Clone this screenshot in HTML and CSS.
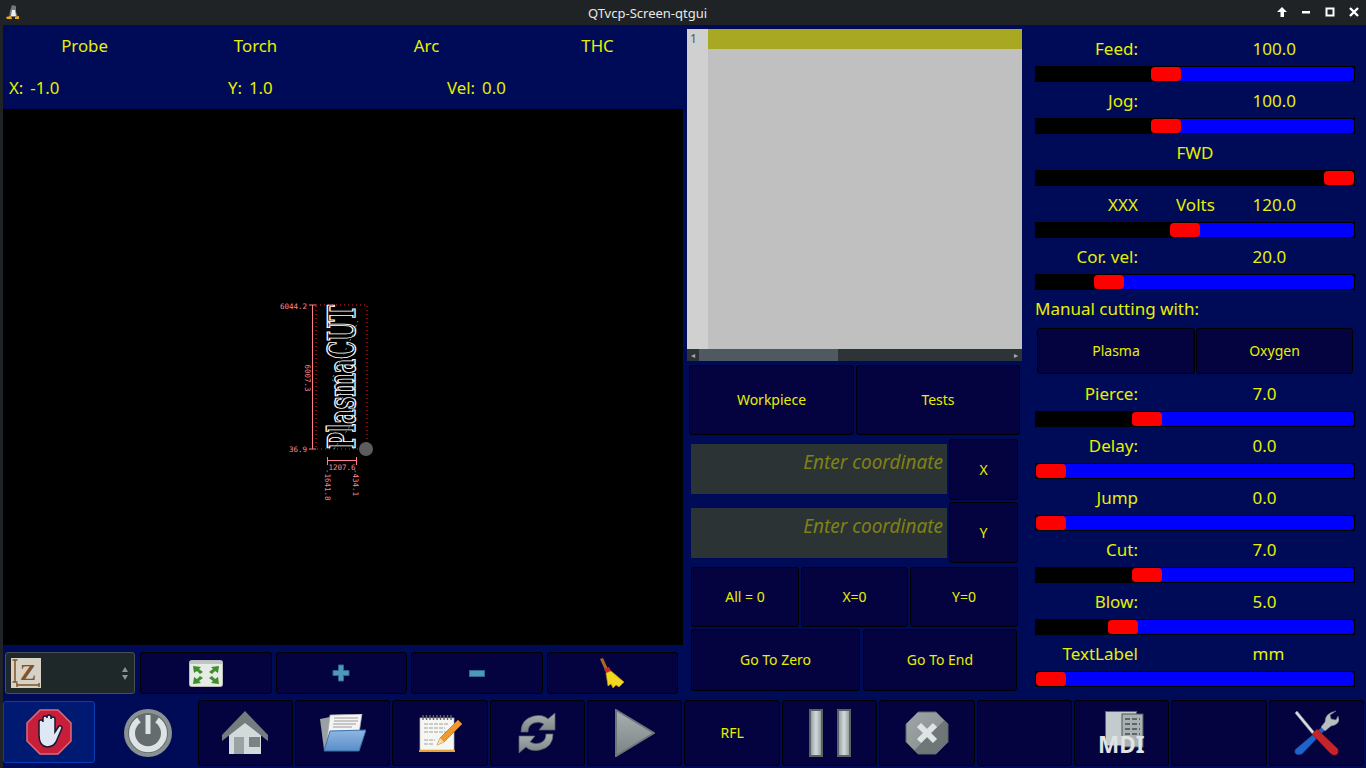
FILE: index.html
```html
<!DOCTYPE html>
<html lang="en">
<head>
<meta charset="UTF-8">
<meta name="viewport" content="width=device-width, initial-scale=1.0">
<title>QTvcp-Screen-qtgui</title>
<link rel="stylesheet" href="styles.css">
</head>
<body>
<svg class="defs" width="0" height="0">
    <defs>
        <linearGradient id="greyV" x1="0" y1="0" x2="1" y2="1"><stop offset="0" stop-color="#a0a7a8"/><stop offset="0.55" stop-color="#8f9697"/><stop offset="0.56" stop-color="#6f7779"/><stop offset="1" stop-color="#6d7577"/></linearGradient>
        <linearGradient id="greyH" x1="0" y1="0" x2="1" y2="0"><stop offset="0" stop-color="#8d9596"/><stop offset="0.5" stop-color="#d3dadb"/><stop offset="1" stop-color="#8d9596"/></linearGradient>
        <linearGradient id="playG" x1="0" y1="0" x2="0" y2="1"><stop offset="0" stop-color="#a8b0b1"/><stop offset="1" stop-color="#7b8385"/></linearGradient>
        <linearGradient id="folderG" x1="0" y1="0" x2="0" y2="1"><stop offset="0" stop-color="#8fb8e2"/><stop offset="1" stop-color="#5a8dc8"/></linearGradient>
    </defs>
</svg>
<div class="titlebar">
    <svg class="tux" viewBox="0 0 16 16" width="16" height="16">
        <path d="M7 1 L11 2 L11 8 L13 13 L4 13 L5 7 Z" fill="#777"/>
        <path d="M7 6 L10 6 L11 12 L6 12 Z" fill="#eee"/>
        <path d="M1 13 L6 12 L7 15 L2 15 Z M10 13 L14 12 L14 15 L10 15 Z" fill="#f0a818"/>
    </svg>
    <span class="title">QTvcp-Screen-qtgui</span>
    <div class="winbtns">
        <svg viewBox="0 0 12 12" width="12" height="12"><path d="M6 1 L11 6 L8 6 L8 11 L4.500 11 L4.500 6 L1 6 Z" fill="#fff"/></svg>
        <svg viewBox="0 0 12 12" width="12" height="12"><rect x="2" y="5" width="8" height="2.500" fill="#fff"/></svg>
        <svg viewBox="0 0 12 12" width="12" height="12"><rect x="2.500" y="2.500" width="7" height="7" fill="none" stroke="#fff" stroke-width="2"/></svg>
        <svg viewBox="0 0 12 12" width="12" height="12"><path d="M2 2 L10 10 M10 2 L2 10" stroke="#fff" stroke-width="2.400"/></svg>
    </div>
</div>

<div class="main">
    <div class="left">
        <div class="status">
            <span>Probe</span><span>Torch</span><span>Arc</span><span>THC</span>
        </div>
        <div class="coords">
            <span>X:<i class="cval">-1.0</i></span><span>Y:<i class="cval">1.0</i></span><span>Vel:<i class="cval">0.0</i></span>
        </div>
        <div class="canvas">
            <svg class="plot" viewBox="0 0 680 536" width="680" height="536">
                <rect x="313" y="196" width="51" height="144" fill="none" stroke="#ff1a1a" stroke-dasharray="1 3"/>
                <path class="dim" d="M306 196 H313 M306 340 H313 M309.500 196 V340 M324 351.500 H353 M324.500 348 V356 M353.500 348 V356"/>
                <text class="dimtxt" x="304" y="199.500" text-anchor="end">6044.2</text>
                <text class="dimtxt" x="304" y="343" text-anchor="end">36.9</text>
                <text class="dimtxt" transform="translate(302 269) rotate(90)" text-anchor="middle">6007.3</text>
                <text class="dimtxt" x="339" y="361" text-anchor="middle">1207.6</text>
                <text class="dimtxt" transform="translate(322 360) rotate(90)">-1641.8</text>
                <text class="dimtxt" transform="translate(350 360) rotate(90)">-434.1</text>
                <text class="logo" transform="translate(352 340) rotate(-90)" textLength="144" lengthAdjust="spacingAndGlyphs">PlasmaCUT</text>
                <path d="M331 340 L352 310 L329 270 L350 225 L355 212" fill="none" stroke="#5f9a9a" stroke-dasharray="2 3"/>
                <circle cx="363" cy="340" r="7" fill="#5c5c5c"/>
            </svg>
        </div>
        <div class="viewbar">
            <div class="combo">
                <svg viewBox="0 0 30 30" width="30" height="30">
                    <rect width="30" height="30" fill="#d8d2c4"/>
                    <path d="M4 2 V24 M1.500 2 H6.500 M1.500 24 H6.500 M6 27 H28 M6 25 V29 M28 25 V29" fill="none" stroke="#80542a" stroke-width="1.500"/>
                    <text class="zlabel" x="17" y="22" text-anchor="middle">Z</text>
                </svg>
                <span class="arrows"><i class="up"></i><i class="down"></i></span>
            </div>
            <button class="btn"><svg viewBox="0 0 34 27" width="34" height="27">
                <rect x="0.500" y="0.500" width="33" height="26" rx="2" fill="#e6ebe6" stroke="#b9bebc"/>
                <rect x="1" y="1" width="32" height="3" fill="#c0c5c6"/>
                <path d="M4 6 L12 7 L10 9 L14 12 L11 14 L8 11 L5 13 Z M30 6 L22 7 L24 9 L20 12 L23 14 L26 11 L29 13 Z M4 24 L12 23 L10 21 L14 18 L11 16 L8 19 L5 17 Z M30 24 L22 23 L24 21 L20 18 L23 16 L26 19 L29 17 Z" fill="#3f8f2a"/>
            </svg></button>
            <button class="btn"><svg viewBox="0 0 18 18" width="18" height="18">
                <path d="M6.500 1 H11.500 V6.500 H17 V11.500 H11.500 V17 H6.500 V11.500 H1 V6.500 H6.500 Z" fill="#4f97bb" stroke="#2c6a8c"/>
            </svg></button>
            <button class="btn"><svg viewBox="0 0 16 7" width="16" height="7">
                <rect x="0.500" y="0.500" width="15" height="6" fill="#4f97bb" stroke="#2c6a8c"/>
            </svg></button>
            <button class="btn"><svg viewBox="0 0 26 30" width="26" height="30">
                <path d="M1 1 L4 0 L9 11 L6 12 Z" fill="#a86a1e"/>
                <path d="M5 11 L10 9 L12 13 L7 15 Z" fill="#c92a2a"/>
                <path d="M7 15 L12 13 L25 24 L20 29 L17 27 L14 30 L12 26 L9 28 Z" fill="#f2d81e" stroke="#b69a10" stroke-width="0.700"/>
            </svg></button>
        </div>
    </div>

    <div class="middle">
        <div class="editor">
            <div class="gutter"><div class="lineno">1</div></div>
            <div class="lines"><div class="curline"></div></div>
        </div>
        <div class="hscroll">
            <span class="sarrow">◂</span><div class="sthumb"></div><span class="sarrow">▸</span>
        </div>
        <div class="row2">
            <button class="btn">Workpiece</button>
            <button class="btn">Tests</button>
        </div>
        <div class="entry">
            <div class="coordinput">Enter coordinate</div>
            <button class="btn axis">X</button>
        </div>
        <div class="entry entry-y">
            <div class="coordinput">Enter coordinate</div>
            <button class="btn axis">Y</button>
        </div>
        <div class="row3">
            <button class="btn">All = 0</button>
            <button class="btn">X=0</button>
            <button class="btn">Y=0</button>
        </div>
        <div class="row4">
            <button class="btn">Go To Zero</button>
            <button class="btn">Go To End</button>
        </div>
    </div>

    <div class="right">
        <div class="srow"><div class="slabel"><span class="sname">Feed:</span><span class="sval">100.0</span></div>
            <div class="slider"><div class="gap" style="width:36.200%"></div><div class="knob"></div><div class="fill"></div></div></div>
        <div class="srow"><div class="slabel"><span class="sname">Jog:</span><span class="sval">100.0</span></div>
            <div class="slider"><div class="gap" style="width:36.200%"></div><div class="knob"></div><div class="fill"></div></div></div>
        <div class="srow"><div class="slabel"><span class="sfwd">FWD</span></div>
            <div class="slider"><div class="gap" style="width:90.500%"></div><div class="knob"></div></div></div>
        <div class="srow"><div class="slabel"><span class="sname">XXX</span><span class="svolts">Volts</span><span class="sval">120.0</span></div>
            <div class="slider"><div class="gap" style="width:42.100%"></div><div class="knob"></div><div class="fill"></div></div></div>
        <div class="srow"><div class="slabel"><span class="sname">Cor. vel:</span><span class="sval">20.0</span></div>
            <div class="slider"><div class="gap" style="width:18.200%"></div><div class="knob"></div><div class="fill"></div></div></div>
        <div class="manual">Manual cutting with:</div>
        <div class="gasrow">
            <button class="btn">Plasma</button>
            <button class="btn">Oxygen</button>
        </div>
        <div class="srow"><div class="slabel"><span class="sname">Pierce:</span><span class="sval">7.0</span></div>
            <div class="slider"><div class="gap" style="width:30.200%"></div><div class="knob"></div><div class="fill"></div></div></div>
        <div class="srow"><div class="slabel"><span class="sname">Delay:</span><span class="sval">0.0</span></div>
            <div class="slider"><div class="gap" style="width:0"></div><div class="knob"></div><div class="fill"></div></div></div>
        <div class="srow"><div class="slabel"><span class="sname">Jump</span><span class="sval">0.0</span></div>
            <div class="slider"><div class="gap" style="width:0"></div><div class="knob"></div><div class="fill"></div></div></div>
        <div class="srow"><div class="slabel"><span class="sname">Cut:</span><span class="sval">7.0</span></div>
            <div class="slider"><div class="gap" style="width:30.200%"></div><div class="knob"></div><div class="fill"></div></div></div>
        <div class="srow"><div class="slabel"><span class="sname">Blow:</span><span class="sval">5.0</span></div>
            <div class="slider"><div class="gap" style="width:22.600%"></div><div class="knob"></div><div class="fill"></div></div></div>
        <div class="srow"><div class="slabel"><span class="sname">TextLabel</span><span class="sval">mm</span></div>
            <div class="slider"><div class="gap" style="width:0"></div><div class="knob"></div><div class="fill"></div></div></div>
    </div>
</div>

<div class="toolbar">
    <button class="tool selected"><svg viewBox="0 0 46 46" width="46" height="46">
        <path d="M14 1 H32 L45 14 V32 L32 45 H14 L1 32 V14 Z" fill="#c81e3a" stroke="#e06a78" stroke-width="1.500"/>
        <path d="M13 26 V13 a2 2 0 0 1 4 0 V9 a2 2 0 0 1 4 0 V8 a2 2 0 0 1 4 0 V10 a2 2 0 0 1 4 0 V23 L33 17 a2 2 0 0 1 3 2 L30 33 Q27 38 21 38 Q13 37 13 26 Z" fill="#dfe7f5" stroke="#151a2e" stroke-width="1.500"/>
    </svg></button>
    <button class="tool plain"><svg viewBox="0 0 48 48" width="48" height="48">
        <circle cx="24" cy="24" r="24" fill="#8a9192"/>
        <circle cx="24" cy="24" r="20" fill="#646c6e"/>
        <path d="M15 11 A16 16 0 1 0 33 11" fill="none" stroke="#dce4e6" stroke-width="6"/>
        <rect x="21.500" y="6" width="5" height="19" fill="#dce4e6"/>
    </svg></button>
    <button class="tool"><svg viewBox="0 0 46 44" width="46" height="44">
        <path d="M7 22 L23 8 L39 22 V43 H7 Z" fill="#d3dadb"/>
        <path d="M0 24 L23 0 L46 24 L46 30 L23 12 L0 30 Z" fill="#747c7e"/>
        <rect x="12" y="26" width="10" height="17" fill="#9aa2a4"/>
        <rect x="27" y="26" width="11" height="10" fill="#7b8385"/>
    </svg></button>
    <button class="tool"><svg viewBox="0 0 46 38" width="46" height="38">
        <path d="M0 5 L10 3 L8 36 L4 36 Z" fill="#9aa1a3"/>
        <path d="M10 1 L42 0 L38 26 L6 34 Z" fill="#f4f4f4" stroke="#a8a8a8" stroke-width="0.700"/>
        <path d="M14 4 H38 M14 7 H38 M13 10 H36 M13 13 H32" stroke="#9a9a9a"/>
        <path d="M10 17 L46 16 L39 37 L4 37 Z" fill="url(#folderG)" stroke="#3b6fa8"/>
    </svg></button>
    <button class="tool"><svg viewBox="0 0 43 37" width="43" height="37">
        <rect x="1" y="3" width="34" height="32" fill="#f6f6f2" stroke="#b8b8b4" stroke-width="0.700"/>
        <rect x="0" y="35" width="36" height="2" fill="#e8a23a"/>
        <path d="M4 0 V5 M7.500 0 V5 M11 0 V5 M14.500 0 V5 M18 0 V5 M21.500 0 V5 M25 0 V5 M28.500 0 V5 M32 0 V5" stroke="#666" stroke-width="1.400"/>
        <path d="M5 9 H30 M5 13 H26 M5 17 H28 M5 25 H16 M5 29 H15" stroke="#a0a0a0" stroke-dasharray="4 1"/>
        <path d="M39 5 L43 9 L25 27 L18 30 L21 23 Z" fill="#f09a2e" stroke="#c4701a" stroke-width="0.700"/>
        <path d="M21 23 L25 27 L18 30 Z" fill="#f2dcb8"/>
    </svg></button>
    <button class="tool"><svg viewBox="0 0 38 40" width="38" height="40">
        <path d="M3 19 Q3 6 16 3 Q25 1 30 6 L37 0 V17 H21 L26 11 Q21 8 16 10 Q10 12 10 19 Z" fill="url(#playG)" stroke="#5a6264" stroke-width="0.700"/>
        <path d="M35 21 Q35 34 22 37 Q13 39 8 34 L1 40 V23 H17 L12 29 Q17 32 22 30 Q28 28 28 21 Z" fill="url(#playG)" stroke="#5a6264" stroke-width="0.700"/>
    </svg></button>
    <button class="tool"><svg viewBox="0 0 40 48" width="40" height="48">
        <path d="M1 1 L39 24 L1 47 Z" fill="url(#playG)" stroke="#6d7577" stroke-width="2"/>
    </svg></button>
    <button class="tool txt">RFL</button>
    <button class="tool"><svg viewBox="0 0 42 48" width="42" height="48">
        <rect x="1" y="1" width="12" height="46" fill="url(#greyH)" stroke="#5a6264" stroke-width="2"/>
        <rect x="29" y="1" width="12" height="46" fill="url(#greyH)" stroke="#5a6264" stroke-width="2"/>
    </svg></button>
    <button class="tool"><svg viewBox="0 0 44 44" width="44" height="44">
        <path d="M13 1 H31 L43 13 V31 L31 43 H13 L1 31 V13 Z" fill="url(#greyV)" stroke="#5f6769"/>
        <path d="M14 14 L30 30 M30 14 L14 30" stroke="#dfe3e4" stroke-width="6"/>
    </svg></button>
    <button class="tool"></button>
    <button class="tool"><span class="mdi">
        <svg viewBox="0 0 39 37" width="39" height="37">
            <rect x="0.500" y="0.500" width="31" height="34" fill="#c3cbcd" stroke="#5d6567"/>
            <rect x="17" y="3" width="21" height="33" fill="#a9b1b3" stroke="#4f5759"/>
            <path d="M20 8 H35 M20 13 H35 M20 18 H35 M20 23 H35" stroke="#5d6567" stroke-width="2" stroke-dasharray="5 2"/>
        </svg>
        <b>MDI</b>
    </span></button>
    <button class="tool"></button>
    <button class="tool"><svg viewBox="0 0 45 46" width="45" height="46">
        <path d="M1 3 L3 1 L22 24 L20 26 Z" fill="#d8dcdd" stroke="#8c9294" stroke-width="0.500"/>
        <path d="M28 17 L31 20 L8 44 Q3 46 1 43 Q0 40 3 38 Z" fill="#1e63c8" stroke="#123f86" stroke-width="0.500"/>
        <path d="M42 1 L36 5 L37 9 L42 10 L44 6 L45 10 Q44 15 37 16 L31 21 L27 17 L31 12 Q31 3 42 1 Z" fill="#b9bfc1" stroke="#7f8587" stroke-width="0.500"/>
        <path d="M18 24 L23 19 L44 39 Q45 44 42 45 Q39 46 36 43 Z" fill="#c4242a" stroke="#7c1216" stroke-width="0.500"/>
    </svg></button>
</div>
</body>
</html>
```
FILE: styles.css
```css
* {
    box-sizing: border-box;
}
html, body {
    margin: 0;
    padding: 0;
}
body {
    width: 1366px;
    height: 768px;
    overflow: hidden;
    background-color: #000b58;
    font-family: "Noto Sans", "Open Sans", sans-serif;
    color: #e6f000;
    border-left: 3px solid #1f2326;
    display: flex;
    flex-direction: column;
}
.defs {
    position: absolute;
}
.titlebar {
    height: 25px;
    margin-left: -3px;
    background-color: #1f2326;
    color: #e8e8e8;
    font-size: 13px;
    position: relative;
    display: flex;
    align-items: center;
    justify-content: center;
    padding-right: 71px;
    flex-shrink: 0;
}
.tux {
    position: absolute;
    left: 5px;
    top: 4px;
}
.winbtns {
    position: absolute;
    right: 0;
    top: 6px;
    display: flex;
    gap: 12px;
    padding-right: 6px;
}
.main {
    display: flex;
    height: 675px;
    flex-shrink: 0;
}
.left {
    width: 680px;
    display: flex;
    flex-direction: column;
}
.status {
    height: 41px;
    display: grid;
    grid-template-columns: repeat(4, 171px);
    margin-left: -4px;
    align-items: center;
    text-align: center;
    font-size: 16.800px;
}
.coords {
    height: 43px;
    display: grid;
    grid-template-columns: repeat(3, 219px);
    padding-left: 6px;
    align-items: center;
    font-size: 16.800px;
}
.cval {
    font-style: normal;
    margin-left: 7px;
}
.canvas {
    height: 536px;
    background-color: #000;
}
.plot {
    display: block;
}
.dim {
    stroke: #ff7f8a;
    fill: none;
}
.dimtxt {
    fill: #ff8a90;
    font-family: "DejaVu Sans Mono", monospace;
    font-size: 7.500px;
}
.logo {
    fill: none;
    stroke: #fff;
    stroke-width: 1.300;
    font-family: "DejaVu Serif", serif;
    font-weight: bold;
    font-size: 38px;
    text-rendering: geometricPrecision;
    opacity: 0.999;
}
.viewbar {
    display: grid;
    grid-template-columns: 131px repeat(4, minmax(0, 1fr));
    gap: 4px;
    padding: 7px 5px 6px 2px;
    height: 55px;
}
.combo {
    width: 130px;
    background-color: #1f2828;
    border: 1px solid #4a4f52;
    border-radius: 3px;
    display: flex;
    align-items: center;
    justify-content: space-between;
    padding: 0 6px 0 5px;
}
.arrows {
    display: flex;
    flex-direction: column;
    gap: 3px;
}
.arrows i {
    display: block;
    width: 0;
    height: 0;
    border-left: 3px solid transparent;
    border-right: 3px solid transparent;
}
.arrows .up {
    border-bottom: 5px solid #8e9294;
}
.arrows .down {
    border-top: 5px solid #8e9294;
}
.zlabel {
    font-family: "Liberation Serif", serif;
    font-size: 24px;
    font-weight: bold;
    fill: #80542a;
}
.btn {
    background-color: #05033f;
    border: 1px solid #000;
    border-radius: 3px;
    color: #e6f000;
    font-family: inherit;
    font-size: 14px;
    padding: 0 0 2px;
    display: flex;
    align-items: center;
    justify-content: center;
}
.axis {
    padding: 0;
}
.viewbar .btn {
    padding: 0;
}
.middle {
    width: 340px;
    margin-left: 4px;
    display: flex;
    flex-direction: column;
    padding-top: 4px;
}
.editor {
    width: 335px;
    height: 320px;
    display: flex;
    background-color: #c0c0c0;
}
.gutter {
    width: 21px;
    background-color: #d0d0d0;
}
.lineno {
    color: #555;
    font-size: 12px;
    padding-left: 3px;
    line-height: 20px;
}
.lines {
    flex: 1;
}
.curline {
    height: 20px;
    background-color: #a8a822;
}
.hscroll {
    width: 335px;
    height: 12px;
    background-color: #2c3438;
    display: flex;
    align-items: center;
    font-size: 8px;
    color: #aaa;
}
.sarrow {
    width: 12px;
    text-align: center;
    line-height: 12px;
}
.sthumb {
    width: 139px;
    height: 12px;
    background-color: #4f5a60;
    margin-right: auto;
}
.row2 {
    display: grid;
    grid-template-columns: 165px 164px;
    gap: 2px;
    height: 70px;
    margin: 4px 0 4px 2px;
}
.entry {
    display: flex;
    align-items: flex-start;
    height: 61px;
    margin-left: 4px;
    gap: 2px;
    margin-bottom: 2px;
}
.entry .btn {
    width: 69px;
    height: 61px;
}
.coordinput {
    width: 256px;
    height: 50px;
    margin-top: 5px;
    background-color: #2c3334;
    color: #7e8214;
    font-style: italic;
    font-size: 19px;
    text-align: right;
    padding: 5px 4px 0 0;
}
.entry-y .coordinput {
    margin-top: 6px;
}
.row3 {
    display: grid;
    grid-template-columns: 108px 107px 108px;
    gap: 2px;
    height: 60px;
    margin: 2px 0 2px 4px;
    width: 327px;
}
.row4 {
    display: grid;
    grid-template-columns: 169px 154px;
    gap: 3px;
    height: 62px;
    margin-left: 4px;
}
.right {
    width: 320px;
    margin-left: 8px;
    padding-top: 12px;
    display: flex;
    flex-direction: column;
}
.srow {
    height: 52px;
    flex-shrink: 0;
}
.slabel {
    height: 22px;
    margin-bottom: 7px;
    position: relative;
    font-size: 17px;
    display: flex;
    align-items: center;
}
.sname {
    width: 103px;
    text-align: right;
}
.svolts {
    position: absolute;
    left: 141px;
}
.sval {
    position: absolute;
    left: 217.500px;
}
.sfwd {
    width: 100%;
    text-align: center;
}
.slider {
    height: 16px;
    width: 320px;
    background-color: #000;
    border: 1px solid #000;
    display: flex;
}
.gap {
    flex-shrink: 0;
}
.knob {
    width: 30px;
    background-color: #f00;
    border-radius: 4px;
    flex-shrink: 0;
    position: relative;
    z-index: 1;
}
.fill {
    flex: 1;
    background-color: #00f;
    border-radius: 0 3px 3px 0;
    margin-left: -4px;
}
.manual {
    font-size: 17px;
    height: 24px;
    line-height: 24px;
}
.gasrow {
    display: grid;
    grid-template-columns: 158px 157px;
    gap: 1px;
    height: 46px;
    margin: 7px 0 8px 2px;
}
.toolbar {
    display: grid;
    grid-template-columns: repeat(14, minmax(0, 1fr));
    gap: 2px;
    height: 66px;
    padding-right: 2px;
    flex-shrink: 0;
}
.tool {
    background-color: #05033f;
    border: 1px solid #000;
    border-radius: 3px;
    color: #e6f000;
    font-family: inherit;
    font-size: 14px;
    padding: 0 0 2px;
    display: flex;
    align-items: center;
    justify-content: center;
}
.tool svg {
    margin-top: 2px;
}
.selected {
    background-color: #001a72;
    border-color: #0a3cb4;
    margin: 1px 3px 3px 0;
}
.plain {
    background-color: transparent;
    border-color: transparent;
}
.mdi {
    display: block;
    position: relative;
    width: 45px;
    height: 43px;
    text-align: left;
}
.mdi svg {
    display: block;
    margin: 0 0 0 6px;
}
.mdi b {
    position: absolute;
    left: -1px;
    bottom: -2px;
    color: #dfe3e4;
    font-size: 22.500px;
    line-height: 22px;
}
```
